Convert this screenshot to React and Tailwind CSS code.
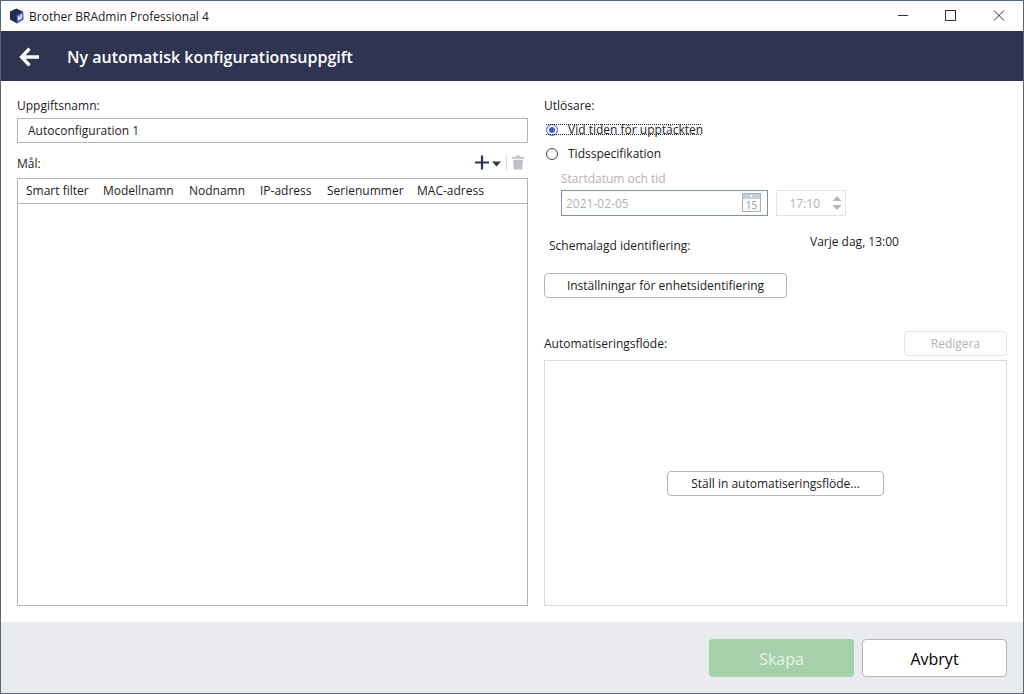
import { useState } from "react";

function AppLogo() {
  return (
    <svg width="16" height="16" viewBox="0 0 16 16" aria-hidden="true">
      <path d="M7.4 0.4 L13.6 3.2 L14.4 11.2 L8 15.4 L1 11.6 V3.6 Z" fill="#232c49" />
      <path d="M7.6 7.4 L14.4 3.6 V11.4 L7.6 15.4 Z" fill="#4a68cf" />
      <path d="M9 8.4 V12.6 L12.8 10.2 V6 L11.4 6.8 V9.6 L10.4 10.2 V7.6 Z" fill="#ffffff" />
    </svg>
  );
}

function TitleBar() {
  const control = "flex h-full w-12 items-center justify-center";
  return (
    <div className="flex h-[30px] items-center bg-white pl-2">
      <AppLogo />
      <span className="ml-1 flex-1 pt-px text-[12px] leading-4">Brother BRAdmin Professional 4</span>
      <button type="button" aria-label="Minimera" className={control}>
        <svg width="12" height="12" viewBox="0 0 12 12" shapeRendering="crispEdges">
          <path d="M1 5.5H11" stroke="#333" fill="none" />
        </svg>
      </button>
      <button type="button" aria-label="Maximera" className={control}>
        <svg width="12" height="12" viewBox="0 0 12 12" shapeRendering="crispEdges">
          <rect x="0.5" y="0.5" width="10" height="10" stroke="#333" fill="none" />
        </svg>
      </button>
      <button type="button" aria-label="Stäng" className={control}>
        <svg width="12" height="12" viewBox="0 0 12 12">
          <path d="M1 0.5L11 10.5M11 0.5L1 10.5" stroke="#333" fill="none" />
        </svg>
      </button>
    </div>
  );
}

function Header() {
  return (
    <header className="flex h-[50px] items-center bg-[#2f3550] pt-px pl-[18px] text-white">
      <button type="button" aria-label="Tillbaka">
        <svg width="20" height="20" viewBox="0 0 20 20" fill="none" stroke="#fff" strokeWidth="3.4">
          <path d="M10.5 1.6L2.6 10L10.5 18.4M2.6 10H20" />
        </svg>
      </button>
      <h1 className="ml-7 text-[16px] leading-6 font-semibold">Ny automatisk konfigurationsuppgift</h1>
    </header>
  );
}

const columns = [
  { name: "Smart filter", width: "w-[77px]" },
  { name: "Modellnamn", width: "w-[86px]" },
  { name: "Nodnamn", width: "w-[71px]" },
  { name: "IP-adress", width: "w-[67px]" },
  { name: "Serienummer", width: "w-[90px]" },
  { name: "MAC-adress", width: "" },
];

function TargetSection() {
  return (
    <section className="flex flex-col">
      <label htmlFor="task-name" className="leading-4">Uppgiftsnamn:</label>
      <input
        id="task-name"
        type="text"
        defaultValue="Autoconfiguration 1"
        className="mt-1 h-[25px] w-full border border-[#b4b6b8] bg-white px-2.5 outline-none"
      />
      <div className="mt-2 flex h-6 items-center">
        <span id="targets" className="flex-1 pt-px">Mål:</span>
        <button type="button" aria-label="Lägg till" className="flex items-center">
          <svg width="28" height="16" viewBox="0 0 28 16">
            <path d="M8 0.5V14.5M1 7.5H15" stroke="#2f3550" strokeWidth="2.2" fill="none" />
            <path d="M18 6.5H27L22.5 11.5Z" fill="#2f3550" />
          </svg>
        </button>
        <span className="mx-1 h-4 w-px bg-[#dcdee0]" />
        <button type="button" aria-label="Ta bort" disabled className="mr-[3px]">
          <svg width="14" height="16" viewBox="0 0 14 16" fill="#bfc1c7">
            <path d="M1 2H5V0.4H9V2H13V3.8H1Z" />
            <path d="M2 4.8H12L11.2 14.6H2.8Z" />
          </svg>
        </button>
      </div>
      <div className="mt-[3px] flex-1 border border-[#b4b6b8]">
        <table aria-labelledby="targets" className="w-full table-fixed border-collapse">
          <thead>
            <tr className="h-6 border-b border-[#b4b6b8]">
              {columns.map((c) => (
                <th key={c.name} scope="col" className={`${c.width} pt-px pl-2 text-left font-normal whitespace-nowrap`}>
                  {c.name}
                </th>
              ))}
            </tr>
          </thead>
          <tbody />
        </table>
      </div>
    </section>
  );
}

const radio =
  "size-3 shrink-0 appearance-none rounded-full border border-[#3a4250] bg-white checked:border-[#5f7fc0] checked:bg-[#3f62c8] checked:shadow-[inset_0_0_0_2px_#fff]";

function CalendarIcon() {
  return (
    <svg width="20" height="20" viewBox="0 0 20 20">
      <rect x="0.5" y="0.5" width="18" height="18" fill="#fbfbfb" stroke="#a9b0b8" />
      <rect x="1" y="1" width="17" height="5" fill="#c3d0de" />
      <circle cx="9.5" cy="3" r="1" fill="#fff" />
      <text x="9.5" y="16" textAnchor="middle" fontSize="10" fill="#9a9a9a">15</text>
    </svg>
  );
}

function TriggerSection() {
  const [trigger, setTrigger] = useState("found");
  return (
    <fieldset className="flex flex-col">
      <legend className="leading-4">Utlösare:</legend>
      <label className="relative mt-1 flex h-6 items-center self-start pl-0.5">
        <input type="radio" name="trigger" checked={trigger === "found"} onChange={() => setTrigger("found")} className={radio} />
        <span className="ml-2.5">Vid tiden för upptäckten</span>
        <span className="absolute inset-x-0.5 top-1.5 h-[11px] border-y border-dotted border-[#222]" />
      </label>
      <label className="flex h-6 items-center self-start pl-0.5">
        <input type="radio" name="trigger" checked={trigger === "time"} onChange={() => setTrigger("time")} className={radio} />
        <span className="ml-2.5">Tidsspecifikation</span>
      </label>
      <div className="pl-[17px] text-[#b3b3b3]">
        <label htmlFor="start-date" className="mt-[3px] block leading-5">Startdatum och tid</label>
        <div className="flex gap-2 pt-px">
          <div className="flex h-[26px] w-[207px] items-center border border-[#7f93aa] pr-[5px]">
            <input id="start-date" type="text" disabled defaultValue="2021-02-05" className="h-full min-w-0 flex-1 px-1" />
            <button type="button" disabled aria-label="Välj datum">
              <CalendarIcon />
            </button>
          </div>
          <div className="flex h-[26px] w-[70px] items-center border border-[#e2e2e2] pr-[3px]">
            <input type="text" aria-label="Starttid" disabled defaultValue="17:10" className="h-full min-w-0 flex-1 pr-3 text-right" />
            <div className="flex flex-col gap-1">
              <button type="button" disabled aria-label="Öka">
                <svg className="block" width="10" height="6" viewBox="0 0 10 6"><path d="M0.5 6L5 1L9.5 6Z" fill="#b5b5b5" /></svg>
              </button>
              <button type="button" disabled aria-label="Minska">
                <svg className="block" width="10" height="6" viewBox="0 0 10 6"><path d="M0.5 0L5 5L9.5 0Z" fill="#b5b5b5" /></svg>
              </button>
            </div>
          </div>
        </div>
      </div>
      <div className="mt-4 flex pl-[5px] leading-5">
        <span className="w-[261px] pt-1">Schemalagd identifiering:</span>
        <span>Varje dag, 13:00</span>
      </div>
      <button type="button" className="mt-[17px] h-[25px] w-[243px] rounded border border-[#b4b6b8] bg-white pt-px">
        Inställningar för enhetsidentifiering
      </button>
    </fieldset>
  );
}

function WorkflowSection() {
  return (
    <section className="mt-[33px] flex flex-1 flex-col">
      <div className="flex items-center justify-between">
        <h2 className="pt-px">Automatiseringsflöde:</h2>
        <button type="button" disabled className="h-[25px] w-[103px] rounded border border-[#e4e4e4] pt-px text-[#b3b3b3]">
          Redigera
        </button>
      </div>
      <div className="mt-1 flex flex-1 items-center justify-center border border-[#d9dadb]">
        <button type="button" className="h-[25px] w-[217px] rounded border border-[#b4b6b8] bg-white pt-px">
          Ställ in automatiseringsflöde...
        </button>
      </div>
    </section>
  );
}

export default function App() {
  return (
    <div className="flex min-h-screen flex-col border border-[#566779] bg-white font-['Open_Sans','Noto_Sans',sans-serif] text-[12px] text-[#1c1c1c]">
      <TitleBar />
      <Header />
      <main className="grid flex-1 grid-cols-[511fr_463fr] gap-4 px-4 pt-[17px] pb-4">
        <TargetSection />
        <div className="flex flex-col">
          <TriggerSection />
          <WorkflowSection />
        </div>
      </main>
      <footer className="flex justify-end gap-2 bg-[#e9ebee] px-4 pt-[17px] pb-4 text-[16px]">
        <button type="button" disabled className="h-[38px] w-[145px] rounded bg-[#a5d0a9] pt-px text-[#e6f3e7]">
          Skapa
        </button>
        <button type="button" className="h-[38px] w-[145px] rounded border border-[#b4b6b8] bg-white pt-px text-black">
          Avbryt
        </button>
      </footer>
    </div>
  );
}
